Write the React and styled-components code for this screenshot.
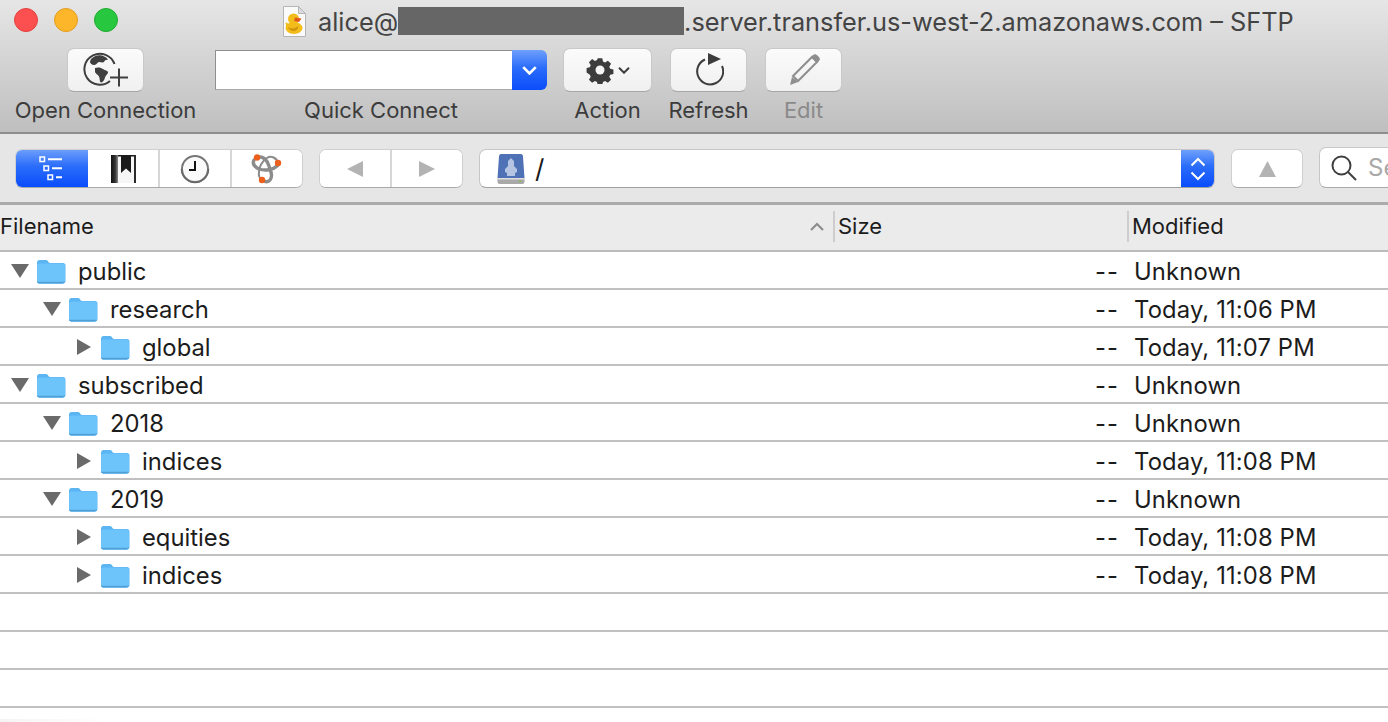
import React from "react";
import styled, { createGlobalStyle } from "styled-components";

const GlobalStyle = createGlobalStyle`
  html, body {
    margin: 0;
    height: 100%;
    overflow: hidden;
    background: #fff;
    font-family: "Inter", "Liberation Sans", sans-serif;
  }
`;

const Window = styled.div`
  position: relative;
  width: 1388px;
  height: 722px;
  overflow: hidden;
  background: #fff;
`;

const TitleArea = styled.div`
  height: 134px;
  box-sizing: border-box;
  background: linear-gradient(#e6e6e6, #d6d6d6 40%, #bfbfbf);
  border-bottom: 2px solid #8e8e8e;
`;

const TitleRow = styled.div`
  height: 40px;
  display: flex;
  align-items: center;
  padding-left: 14px;
`;

const Light = styled.span`
  width: 24px;
  height: 24px;
  box-sizing: border-box;
  margin-right: 16px;
  border-radius: 50%;
  background: ${({ $color }) => $color};
  border: 1px solid ${({ $edge }) => $edge};
`;

const TitleText = styled.div`
  display: flex;
  align-items: center;
  margin-left: 149px;
  padding-top: 2px;
  font-size: 25.3px;
  color: #444;
  white-space: nowrap;
`;

const Redacted = styled.span`
  width: 286px;
  height: 28px;
  background: #666;
`;

const DocIcon = styled.svg`
  margin-right: 12px;
`;

const Toolbar = styled.div`
  display: flex;
  align-items: flex-start;
  padding: 8px 0 0 15px;
`;

const ToolItem = styled.div`
  width: ${({ $width }) => $width}px;
  margin-right: ${({ $gap }) => $gap}px;
  display: flex;
  flex-direction: column;
  align-items: center;
`;

const ToolButton = styled.div`
  width: ${({ $width }) => $width}px;
  height: 44px;
  box-sizing: border-box;
  display: flex;
  align-items: center;
  justify-content: center;
  gap: 4px;
  border-radius: 7px;
  background: linear-gradient(#fbfbfb, #f0f0f0);
  border: 1px solid #c9c9c9;
  border-bottom-color: #a6a6a6;
`;

const QuickField = styled.div`
  width: 100%;
  height: 40px;
  margin-top: 2px;
  display: flex;
`;

const QuickInput = styled.div`
  flex: 1;
  background: #fff;
  border: 1px solid #8f8f8f;
  border-right: 0;
  border-bottom-color: #a8a8a8;
`;

const BlueStepper = styled.div`
  width: ${({ $width }) => $width}px;
  display: flex;
  align-items: center;
  justify-content: center;
  border-radius: 0 6px 6px 0;
  background: linear-gradient(#6ea0fb, #2a6cfa 45%, #0a4dfb);
`;

const ToolLabel = styled.div`
  margin-top: ${({ $top }) => $top}px;
  font-size: 22px;
  line-height: 28px;
  color: ${({ $dim }) => ($dim ? "#8a8a8a" : "#3c3c3c")};
  white-space: nowrap;
`;

const NavBar = styled.div`
  height: 71px;
  box-sizing: border-box;
  display: flex;
  align-items: flex-start;
  padding: 15px 0 0 15px;
  gap: 16px;
  background: #e6e6e6;
  border-bottom: 3px solid #ababab;
`;

const Segments = styled.div`
  height: 39px;
  box-sizing: border-box;
  display: flex;
  overflow: hidden;
  flex-shrink: 0;
  background: #fff;
  border-radius: 7px;
  border: 1px solid #cfcfcf;
  border-bottom-color: #a9a9a9;
`;

const Segment = styled.div`
  width: ${({ $width }) => $width}px;
  box-sizing: border-box;
  display: flex;
  align-items: center;
  justify-content: center;
  border-right: ${({ $last }) => ($last ? "0" : "2px solid #d6d6d6")};
  background: ${({ $active }) =>
    $active ? "linear-gradient(#6b9dfb, #2a6cfa 45%, #0a4dfb)" : "#fff"};
`;

const PathField = styled.div`
  width: 736px;
  height: 39px;
  flex-shrink: 0;
  box-sizing: border-box;
  display: flex;
  align-items: center;
  background: #fff;
  border-radius: 7px;
  border: 1px solid #c6c6c6;
  border-bottom-color: #9f9f9f;
  padding-left: 17px;
  font-size: 26px;
  color: #1a1a1a;
  overflow: hidden;
`;

const PathText = styled.span`
  margin-left: 10px;
`;

const PathStepper = styled.div`
  margin-left: auto;
  width: 33px;
  height: 100%;
  display: flex;
  align-items: center;
  justify-content: center;
  background: linear-gradient(#6ea0fb, #2a6cfa 45%, #0a4dfb);
`;

const SearchField = styled.div`
  width: 130px;
  height: 41px;
  margin-top: -2px;
  flex-shrink: 0;
  box-sizing: border-box;
  display: flex;
  align-items: center;
  gap: 11px;
  padding-left: 11px;
  background: #fff;
  border-radius: 7px;
  border: 1px solid #c6c6c6;
  border-bottom-color: #a9a9a9;
  font-size: 24px;
  color: #a8a8a8;
  overflow: hidden;
`;

const SearchGlyph = styled.svg`
  flex-shrink: 0;
`;

const HeaderRow = styled.div`
  height: 47px;
  box-sizing: border-box;
  display: grid;
  grid-template-columns: 833px 294px 1fr;
  background: #ebebeb;
  border-bottom: 2px solid #bcbcbc;
  font-size: 22px;
  color: #1c1c1c;
`;

const HeaderCell = styled.div`
  display: flex;
  align-items: center;
  padding-left: ${({ $pad }) => $pad}px;
  padding-bottom: 3px;
  position: relative;
  &::before {
    content: "";
    display: ${({ $sep }) => ($sep ? "block" : "none")};
    position: absolute;
    left: 0;
    top: 6px;
    bottom: 8px;
    width: 2px;
    background: #cdcdcd;
  }
`;

const SortMark = styled.svg`
  margin-left: auto;
  margin-right: 9px;
`;

const Row = styled.div`
  height: 38px;
  box-sizing: border-box;
  display: grid;
  grid-template-columns: 1fr 48px 269px;
  align-items: center;
  border-bottom: 2px solid #c0c0c0;
  font-size: 23.8px;
  color: #1c1c1c;
  background: #fff;
`;

const NameCell = styled.div`
  display: flex;
  align-items: center;
  padding-left: ${({ $level }) => 11 + $level * 32}px;
  padding-top: 2px;
`;

const Disclosure = styled.svg`
  flex-shrink: 0;
  margin-right: 7px;
`;

const FolderName = styled.span`
  margin-left: 12px;
`;

const SizeCell = styled.div`
  justify-self: end;
  padding-top: 2px;
  letter-spacing: 1px;
  white-space: nowrap;
  grid-column: 2;
`;

const DateCell = styled.div`
  padding: 2px 0 0 15px;
  letter-spacing: 0.13px;
  white-space: nowrap;
`;

const Smudge = styled.div`
  position: absolute;
  left: 0;
  bottom: 0;
  width: 105px;
  height: 3px;
  background: linear-gradient(90deg, #f4f4f4, #fbfbfb 70%, #fff);
`;

const rows = [
  { name: "public", level: 0, open: true, date: "Unknown" },
  { name: "research", level: 1, open: true, date: "Today, 11:06 PM" },
  { name: "global", level: 2, open: false, date: "Today, 11:07 PM" },
  { name: "subscribed", level: 0, open: true, date: "Unknown" },
  { name: "2018", level: 1, open: true, date: "Unknown" },
  { name: "indices", level: 2, open: false, date: "Today, 11:08 PM" },
  { name: "2019", level: 1, open: true, date: "Unknown" },
  { name: "equities", level: 2, open: false, date: "Today, 11:08 PM" },
  { name: "indices", level: 2, open: false, date: "Today, 11:08 PM" },
];

const Folder = () => (
  <svg width="30" height="25" viewBox="0 0 30 25">
    <path d="M1 4C1 2 2 1 3.500 1h6c1.500 0 2 .6 3 2 .5.7 1 1 2 1h12.500c1.500 0 2.500 1 2.500 2.500V22c0 1.500-1 2.500-2.500 2.500h-24C2 24.500 1 23.500 1 22z" fill="#5ab5f2" />
    <path d="M1 7c0-1.500 1-2.400 2.500-2.400h23C28 4.600 29 5.600 29 7v15c0 1.500-1 2.500-2.500 2.500h-23C2 24.500 1 23.500 1 22z" fill="#6cc4fb" />
    <path d="M1 22.800c.3 1.100 1.200 1.700 2.500 1.700h23c1.300 0 2.200-.6 2.500-1.700z" fill="#4f9fd8" />
  </svg>
);

const Triangle = ({ open }) =>
  open ? (
    <Disclosure width="18" height="16" viewBox="0 0 18 16">
      <path d="M0 1h18L9 15z" fill="#6a6a6a" />
    </Disclosure>
  ) : (
    <Disclosure width="18" height="18" viewBox="0 0 18 18">
      <path d="M2 1l14 8-14 8z" fill="#6a6a6a" />
    </Disclosure>
  );

const DuckDoc = () => (
  <DocIcon width="23" height="31" viewBox="0 0 23 31">
    <path d="M.5.5h15l7 7v23H.5z" fill="#fafafa" stroke="#b5b5b5" />
    <path d="M15.500.5v7h7z" fill="#dcdcdc" stroke="#b5b5b5" />
    <ellipse cx="11" cy="22" rx="8.500" ry="6" fill="#f2bc1a" />
    <path d="M2.500 16l5 3-4 4z" fill="#f2bc1a" />
    <circle cx="10.500" cy="13" r="5.500" fill="#f2bc1a" />
    <path d="M12 11.500l6.500 1-2.500 3.500-5-1z" fill="#e2581c" />
    <path d="M5 21c3 2 7 2 10-1 .5 3-1.500 5-5 5-2.500 0-4-2-5-4z" fill="#d1960f" />
  </DocIcon>
);

const GlobePlus = () => (
  <svg width="46" height="36" viewBox="0 0 46 36">
    <path d="M27 29A15.500 15.500 0 1 1 31.500 12" fill="none" stroke="#3f3f3f" strokeWidth="2" />
    <path d="M8 7c3-3 7-4.500 11-3.500 3 1 6 3 6 4.500-2-.5-3 .5-4 2-1 1-3 0-5 0-2 .5-2.500 3-5 3-2 0-4-2-4-3 0-1 1-3 1-3z" fill="#3f3f3f" />
    <path d="M12 16c3-1 6-.5 8 1s5 1.500 5 3.500c0 2-2.500 2.500-3 5-.5 2-2 5-4 5-1.500-.5-1-4-2-6-1-2-4-3-4-5 0-1.500 0-3 0-3.500z" fill="#3f3f3f" />
    <path d="M36 16.500v18M27 25.500h18" stroke="#3f3f3f" strokeWidth="2" />
  </svg>
);

const Gear = () => (
  <svg width="28" height="28" viewBox="0 0 28 28">
    <path
      d="M11.500 1h5l.8 3.600 2.300 1 3.200-2 3.500 3.500-2 3.200 1 2.300 3.600.8v5l-3.600.8-1 2.300 2 3.200-3.500 3.500-3.200-2-2.300 1-.8 3.600h-5l-.8-3.600-2.300-1-3.200 2-3.500-3.500 2-3.200-1-2.300L-.9 16.700v-5l3.600-.8 1-2.300-2-3.200 3.500-3.500 3.200 2 2.300-1z"
      transform="translate(1.400 1.400) scale(.9)"
      fill="#3c3c3c"
    />
    <circle cx="14" cy="14" r="4.500" fill="#f4f4f4" />
  </svg>
);

const Chevron = ({ color = "#3c3c3c", size = 12, width = 2 }) => (
  <svg width={size} height={size * 0.7} viewBox="0 0 12 8">
    <path d="M1 1.500l5 5 5-5" fill="none" stroke={color} strokeWidth={width} />
  </svg>
);

const RefreshIcon = () => (
  <svg width="30" height="34" viewBox="0 0 30 34">
    <path d="M11 6.500A13 13 0 1 0 28 13" fill="none" stroke="#3c3c3c" strokeWidth="2" />
    <path d="M14 0l13 6L14 12z" fill="#3c3c3c" />
  </svg>
);

const PencilIcon = () => (
  <svg width="34" height="34" viewBox="0 0 34 34">
    <path d="M6 23L25 4l5 5-19 19z" fill="none" stroke="#8e8e8e" strokeWidth="2" />
    <path d="M5 24l6 5-8 3z" fill="#8e8e8e" />
    <path d="M26 2c2-1.500 3-1 5 1s2.500 3 1 5l-2 2-6-6z" fill="#8e8e8e" />
  </svg>
);

const ListIcon = () => (
  <svg width="26" height="26" viewBox="0 0 26 26">
    <g fill="none" stroke="#fff" strokeWidth="1.500">
      <rect x="1" y="1" width="4.500" height="4.500" />
      <rect x="5" y="10" width="4.500" height="4.500" />
      <rect x="9" y="19" width="4.500" height="4.500" />
    </g>
    <path d="M9 3.200h14M13 12.200h10M17 21.200h6" stroke="#fff" strokeWidth="2" />
  </svg>
);

const BookmarkIcon = () => (
  <svg width="25" height="28" viewBox="0 0 25 28">
    <defs>
      <linearGradient id="spine" x1="0" x2="1" y1="0" y2="0">
        <stop offset="0" stopColor="#111" />
        <stop offset="0.6" stopColor="#333" />
        <stop offset="1" stopColor="#888" />
      </linearGradient>
    </defs>
    <rect width="25" height="28" fill="#1a1a1a" />
    <rect width="7" height="28" fill="url(#spine)" />
    <path d="M7 0h16v28H7z" fill="#f6f6f6" />
    <path d="M23 0h2v28h-2z" fill="#2a2a2a" />
    <path d="M7 0h16v1.500H7z" fill="#1a1a1a" />
    <path d="M10 0h10v18l-5-4.500L10 18z" fill="#1a1a1a" />
  </svg>
);

const ClockIcon = () => (
  <svg width="30" height="30" viewBox="0 0 30 30">
    <circle cx="15" cy="15" r="13" fill="#fafafa" stroke="#777" strokeWidth="2" />
    <path d="M1.500 15A13.500 13.500 0 0 0 28.500 15" fill="none" stroke="#666" strokeWidth="1.500" />
    <path d="M15 7v9H9" fill="none" stroke="#111" strokeWidth="2" />
  </svg>
);

const BonjourIcon = () => (
  <svg width="32" height="30" viewBox="0 0 32 30">
    <g fill="none" stroke="#8c8c8c" strokeLinecap="round">
      <path d="M6 3c6-1 10 3 12 9s4 10 1 14c-2 2.500-5 2-8 0" strokeWidth="3.400" />
      <path d="M27 9c-1-5-7-8-11-5-5 3-8 9-8 14-.5 3 0 6 3 8" strokeWidth="2" />
      <path d="M3 6c-2 4 1 7 5 9 6 2 14 1 18-3 1.500-1 2-2 1-3" strokeWidth="3.400" />
    </g>
    <circle cx="6" cy="3.500" r="3.200" fill="#ec5f1c" />
    <circle cx="27" cy="9" r="3.200" fill="#ec5f1c" />
    <circle cx="11" cy="26" r="3.200" fill="#ec5f1c" />
  </svg>
);

const ArrowLeft = () => (
  <svg width="16" height="16" viewBox="0 0 16 16">
    <path d="M16 0v16L0 8z" fill="#b3b3b3" />
  </svg>
);

const ArrowRight = () => (
  <svg width="16" height="16" viewBox="0 0 16 16">
    <path d="M0 0v16l16-8z" fill="#b3b3b3" />
  </svg>
);

const ArrowUp = () => (
  <svg width="17" height="16" viewBox="0 0 17 16">
    <path d="M8.500 0L17 16H0z" fill="#b3b3b3" />
  </svg>
);

const DriveIcon = () => (
  <svg width="28" height="30" viewBox="0 0 28 30">
    <path d="M2 2.500C2 1 3 0 4 0h20c1 0 2 1 2 2.500L27.500 24H.5z" fill="#4f71b5" />
    <path d="M14 4l3 3v5l3 3v3l-2 1v3h-8v-3l-2-1v-3l3-3V7z" fill="#c6d2ea" opacity=".85" />
    <path d="M.5 24h27v4c0 1-1 2-2 2H2.500c-1 0-2-1-2-2z" fill="#a9a9a9" />
    <path d="M.5 24h27v1.500H.5z" fill="#dedede" />
    <rect x="22" y="26.500" width="2" height="1.500" fill="#7fbf3f" />
  </svg>
);

const UpDown = () => (
  <svg width="16" height="24" viewBox="0 0 16 24">
    <path d="M1.500 8.500L8 2l6.500 6.500M1.500 15.500L8 22l6.500-6.500" fill="none" stroke="#fff" strokeWidth="2" />
  </svg>
);

const SearchIcon = () => (
  <SearchGlyph width="26" height="26" viewBox="0 0 26 26">
    <circle cx="10.500" cy="10.500" r="9" fill="none" stroke="#3f3f3f" strokeWidth="2" />
    <path d="M17 17l8 8" stroke="#3f3f3f" strokeWidth="2" />
  </SearchGlyph>
);

export default function App() {
  return (
    <Window>
      <GlobalStyle />
      <TitleArea>
        <TitleRow>
          <Light $color="#fc4f4f" $edge="#e3413f" />
          <Light $color="#fdb529" $edge="#e29d1e" />
          <Light $color="#27c73f" $edge="#1faa30" />
          <TitleText>
            <DuckDoc />
            alice@
            <Redacted />
            .server.transfer.us-west-2.amazonaws.com – SFTP
          </TitleText>
        </TitleRow>
        <Toolbar>
          <ToolItem $width={181} $gap={19}>
            <ToolButton $width={77}>
              <GlobePlus />
            </ToolButton>
            <ToolLabel $top={4}>Open Connection</ToolLabel>
          </ToolItem>
          <ToolItem $width={332} $gap={16}>
            <QuickField>
              <QuickInput />
              <BlueStepper $width={35}>
                <Chevron color="#fff" size={15} width={2.200} />
              </BlueStepper>
            </QuickField>
            <ToolLabel $top={6}>Quick Connect</ToolLabel>
          </ToolItem>
          <ToolItem $width={89} $gap={16}>
            <ToolButton $width={89}>
              <Gear />
              <Chevron />
            </ToolButton>
            <ToolLabel $top={4}>Action</ToolLabel>
          </ToolItem>
          <ToolItem $width={81} $gap={16}>
            <ToolButton $width={77}>
              <RefreshIcon />
            </ToolButton>
            <ToolLabel $top={4}>Refresh</ToolLabel>
          </ToolItem>
          <ToolItem $width={77} $gap={0}>
            <ToolButton $width={77}>
              <PencilIcon />
            </ToolButton>
            <ToolLabel $top={4} $dim>Edit</ToolLabel>
          </ToolItem>
        </Toolbar>
      </TitleArea>
      <NavBar>
        <Segments>
          <Segment $width={72} $active $last>
            <ListIcon />
          </Segment>
          <Segment $width={72}>
            <BookmarkIcon />
          </Segment>
          <Segment $width={72}>
            <ClockIcon />
          </Segment>
          <Segment $width={70} $last>
            <BonjourIcon />
          </Segment>
        </Segments>
        <Segments>
          <Segment $width={72}>
            <ArrowLeft />
          </Segment>
          <Segment $width={70} $last>
            <ArrowRight />
          </Segment>
        </Segments>
        <PathField>
          <DriveIcon />
          <PathText>/</PathText>
          <PathStepper>
            <UpDown />
          </PathStepper>
        </PathField>
        <Segments>
          <Segment $width={70} $last>
            <ArrowUp />
          </Segment>
        </Segments>
        <SearchField>
          <SearchIcon />
          Search
        </SearchField>
      </NavBar>
      <HeaderRow>
        <HeaderCell $pad={0}>
          Filename
          <SortMark width="14" height="9" viewBox="0 0 14 9">
            <path d="M1 8l6-6 6 6" fill="none" stroke="#8a8a8a" strokeWidth="2" />
          </SortMark>
        </HeaderCell>
        <HeaderCell $pad={5} $sep>Size</HeaderCell>
        <HeaderCell $pad={5} $sep>Modified</HeaderCell>
      </HeaderRow>
      {rows.map((row, i) => (
        <Row key={i}>
          <NameCell $level={row.level}>
            <Triangle open={row.open} />
            <Folder />
            <FolderName>{row.name}</FolderName>
          </NameCell>
          <SizeCell>--</SizeCell>
          <DateCell>{row.date}</DateCell>
        </Row>
      ))}
      <Row />
      <Row />
      <Row />
      <Smudge />
    </Window>
  );
}
